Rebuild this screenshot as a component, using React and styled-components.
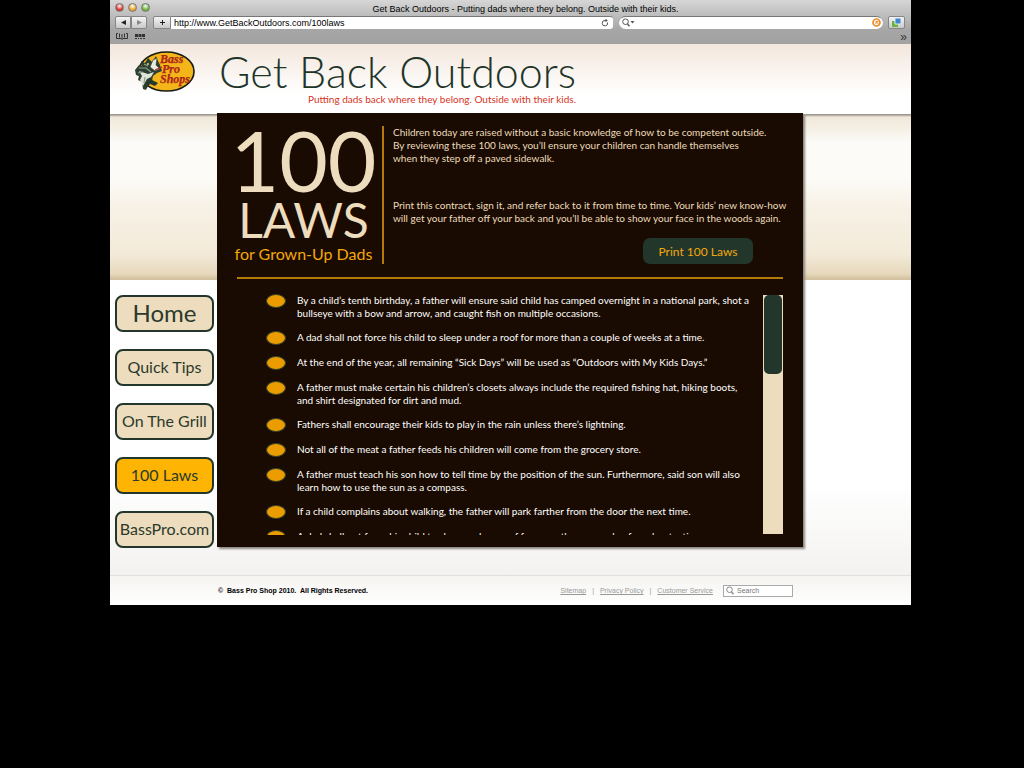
import React from "react";
import styled, { createGlobalStyle } from "styled-components";

const humanist = `Lato, "Open Sans", sans-serif`;
const system = `"Liberation Sans", Arial, sans-serif`;

const Global = createGlobalStyle`
  *, *::before, *::after { box-sizing: border-box; }
  body { margin: 0; background: #000; font-family: ${humanist}; }
  h1, h2, p, ul { margin: 0; padding: 0; font-weight: 400; }
  button, input { font: inherit; margin: 0; }
`;

const Page = styled.div`
  min-height: 100vh;
  padding: 0 113px 0 110px;
  background: #000;
`;

const Browser = styled.div`
  display: flex;
  flex-direction: column;
  background: #fff;
`;

const Chrome = styled.header`
  height: 44px;
  background: linear-gradient(#d6d6d6, #a6a6a6 30px, #a2a2a2);
  font-family: ${system};
  font-size: 9px;
  line-height: 12px;
  color: #000;
`;

const TitleBar = styled.div`
  display: flex;
  align-items: center;
  height: 15px;
  padding: 0 5px;
`;

const Lights = styled.div`
  display: flex;
  gap: 4px;
  width: 60px;
`;

const Light = styled.button`
  width: 9px;
  height: 9px;
  padding: 0;
  border: 1px solid #777;
  border-radius: 50%;
  background: radial-gradient(circle at 50% 30%, #fff 0, ${(p) => p.$tone} 60%);
`;

const WindowTitle = styled.div`
  flex: 1;
  padding: 3px 30px 0 0;
  text-align: center;
`;

const Toolbar = styled.div`
  display: flex;
  align-items: center;
  height: 14px;
  padding: 0 6px 0 5px;
`;

const ToolButton = styled.button`
  display: grid;
  place-items: center;
  width: ${(p) => p.$width || 16}px;
  height: 13px;
  margin-left: ${(p) => (p.$apart ? 6 : 0)}px;
  padding: 0;
  border: 1px solid #858585;
  border-radius: ${(p) => p.$radius || "2px"};
  background: linear-gradient(#f4f4f4, #c9c9c9);
`;

const Address = styled.form`
  display: flex;
  align-items: center;
  flex: 443;
  height: 13px;
  margin-right: 6px;
  padding-right: 4px;
  background: #fff;
  border-top: 1px solid #777;
  border-radius: 0 3px 3px 0;
`;

const WebSearch = styled.form`
  display: flex;
  align-items: center;
  flex: 262;
  height: 13px;
  margin-right: 5px;
  padding: 0 2px 0 3px;
  background: #fff;
  border-top: 1px solid #777;
  border-radius: 7px;
`;

const BareInput = styled.input`
  flex: 1;
  min-width: 0;
  height: 12px;
  padding: 0 3px;
  border: 0;
  outline: 0;
  background: transparent;
  color: inherit;
`;

const Bookmarks = styled.div`
  display: flex;
  align-items: center;
  gap: 7px;
  height: 15px;
  padding: 0 4px 0 6px;
`;

const Overflow = styled.span`
  margin-left: auto;
  font-size: 12px;
  color: #333;
`;

const Masthead = styled.div`
  display: flex;
  height: 70px;
  background: linear-gradient(#f3e6dc, #fff 50px);
`;

const LogoLink = styled.a`
  width: 109px;
  padding: 7px 0 0 25px;
`;

const SiteTitle = styled.h1`
  height: 49px;
  padding-top: 3px;
  font-size: 43px;
  font-weight: 300;
  line-height: 50px;
  color: #1f3529;
  white-space: nowrap;
`;

const Tagline = styled.p`
  font-size: 10px;
  line-height: 13px;
  text-align: right;
  color: #d6331c;
`;

const Main = styled.main`
  display: grid;
  grid-template-columns: 107px minmax(0, 1fr) 108px;
  padding-bottom: 27px;
  background:
    linear-gradient(#8f8c85, #c9c2b4 2px, #f0e8da 3px, #f4eee2 12px, #fcfbf7 28px, #fcfbf7 65px, #f7f1e5 95px, #f3ead9 140px, #e6d8bc 160px, #d3c29f 165px, #cdbf9f) 0 0 / 100% 166px no-repeat,
    linear-gradient(#fff 80%, #f3f2f0);
`;

const Nav = styled.nav`
  display: flex;
  flex-direction: column;
  gap: 17px;
  padding: 181px 3px 0 5px;
`;

const NavLink = styled.a`
  display: flex;
  align-items: center;
  justify-content: center;
  height: 37px;
  padding-bottom: 2px;
  border: 2px solid #22362b;
  border-radius: 8px;
  background: ${(p) => (p.$active ? "#fdb403" : "#eddcbd")};
  color: #2b3a2c;
  font-size: ${(p) => (p.$large ? 24 : 16)}px;
  text-decoration: none;
  white-space: nowrap;
`;

const Panel = styled.section`
  margin-top: -1px;
  height: 434px;
  padding: 13px 20px 0;
  background: #190b01;
  box-shadow: 2px 2px 2px #8a8580;
`;

const Intro = styled.div`
  display: grid;
  grid-template-columns: 147px minmax(0, 1fr);
  height: 138px;
`;

const Lockup = styled.h2`
  display: flex;
  flex-direction: column;
  align-items: center;
  padding-right: 12px;
  border-right: 2px solid #b57a08;
  color: #eddcbd;
`;

const Big = styled.span`
  font-size: 84px;
  line-height: 68px;
  height: 72px;
`;

const Laws = styled.span`
  font-size: 48px;
  line-height: 44px;
  height: 47px;
`;

const Sub = styled.span`
  font-size: 16px;
  line-height: 18px;
  color: #f4a70a;
  white-space: nowrap;
`;

const Copy = styled.div`
  padding-left: 9px;
  font-size: 10px;
  line-height: 13px;
  color: #eddcbd;
  white-space: nowrap;
`;

const CopyBlock = styled.p`
  margin-bottom: ${(p) => p.$gap}px;
`;

const PrintButton = styled.button`
  display: block;
  width: 110px;
  height: 26px;
  margin: 0 30px 0 auto;
  padding: 0;
  border: 0;
  border-radius: 7px;
  background: #22362b;
  color: #f4a70a;
  font-size: 12px;
`;

const Rule = styled.hr`
  height: 2px;
  margin: 13px 0 15px;
  border: 0;
  background: #b57a08;
`;

const Scroller = styled.div`
  display: flex;
  justify-content: space-between;
  height: 241px;
`;

const LawList = styled.ul`
  flex: 1;
  height: 241px;
  padding-left: 29px;
  overflow: hidden;
  list-style: none;
`;

const Law = styled.li`
  display: grid;
  grid-template-columns: 31px minmax(0, 1fr);
  margin-bottom: 11px;
  font-size: 10px;
  line-height: 13px;
  color: #fff;
  white-space: nowrap;

  &::before {
    content: "";
    width: 20px;
    height: 14px;
    border: 1px solid #35402a;
    border-radius: 50%;
    background: #eb9d00;
  }
`;

const Track = styled.div`
  width: 20px;
  height: 239px;
  margin-top: 1px;
  padding: 0 1px;
  background: #eddcbd;
`;

const Thumb = styled.div`
  height: 79px;
  border-radius: 5px;
  background: #22362b;
`;

const Footer = styled.footer`
  display: flex;
  align-items: center;
  height: 30px;
  padding: 0 118px 0 108px;
  border-top: 1px solid #e2e0dc;
  background: linear-gradient(#f5f4f1, #fff);
  font-family: ${system};
  font-size: 7px;
  color: #999;
`;

const Copyright = styled.p`
  margin-right: auto;
  color: #000;
  font-weight: 700;
  white-space: pre;
`;

const FooterLink = styled.a`
  color: #999;
`;

const Separator = styled.span`
  padding: 0 6px;
`;

const SiteSearch = styled.form`
  display: flex;
  align-items: center;
  width: 70px;
  height: 12px;
  margin-left: 10px;
  padding-left: 2px;
  border: 1px solid #aaa;
  background: #fff;
`;

const Magnifier = ({ color = "#555", menu }) => (
  <svg width={menu ? 13 : 8} height="9" viewBox={menu ? "0 0 13 9" : "0 0 8 9"} fill="none" stroke={color}>
    <circle cx="3.5" cy="3.7" r="2.8" />
    <path d="M5.5 6l2 2.3" strokeWidth="1.3" />
    {menu && <path d="M8.5 3h4l-2 2.5z" fill={color} stroke="none" />}
  </svg>
);

const Logo = () => (
  <svg width="60" height="42" viewBox="0 0 60 42" role="img" aria-label="Bass Pro Shops">
    <ellipse cx="31.5" cy="20.5" rx="27.5" ry="19.5" fill="#f4b51b" stroke="#151a12" strokeWidth="1.6" />
    <path d="M0 19L4 14 7 15 6 10 10 12 13 7 17 11 21 5 22 8 25 14 27 20 22 22 18 25 17 30 13 33 11 39 8 38 7 31 3 29 4 25 1 24z" fill="#2c4031" />
    <path d="M18 9l4-2-1 7 4 4-5 2-5-4z" fill="#e9ebdf" stroke="#29382b" strokeWidth=".6" />
    <path d="M4 20l9 3 6-2-3 5-4 2-4 7-3-6 2-4z" fill="#dfe4d8" />
    <path d="M4 17l7 0 5 4M3 22l5-1M10 26l-1 6M9 13l4 2" stroke="#8ea18b" strokeWidth="1.2" fill="none" />
    <path d="M15 28l8 4-3 3-5-2-4 5-1-4z" fill="#27392c" />
    <circle cx="13" cy="13" r="1" fill="#e9d35e" />
    <path d="M20 19l7-3" stroke="#b8281b" strokeWidth="1.2" />
    <text fill="#c0261c" stroke="#7f2110" strokeWidth=".25" fontFamily="Liberation Serif, serif" fontStyle="italic" fontWeight="700" fontSize="12">
      <tspan x="25" y="12">Bass</tspan>
      <tspan x="27" y="22">Pro</tspan>
      <tspan x="25" y="32">Shops</tspan>
    </text>
  </svg>
);

const links = [
  { label: "Home", large: true },
  { label: "Quick Tips" },
  { label: "On The Grill" },
  { label: "100 Laws", active: true },
  { label: "BassPro.com" },
];

const laws = [
  ["By a child’s tenth birthday, a father will ensure said child has camped overnight in a national park, shot a", "bullseye with a bow and arrow, and caught fish on multiple occasions."],
  ["A dad shall not force his child to sleep under a roof for more than a couple of weeks at a time."],
  ["At the end of the year, all remaining “Sick Days” will be used as “Outdoors with My Kids Days.”"],
  ["A father must make certain his children’s closets always include the required fishing hat, hiking boots,", "and shirt designated for dirt and mud."],
  ["Fathers shall encourage their kids to play in the rain unless there’s lightning."],
  ["Not all of the meat a father feeds his children will come from the grocery store."],
  ["A father must teach his son how to tell time by the position of the sun. Furthermore, said son will also", "learn how to use the sun as a compass."],
  ["If a child complains about walking, the father will park farther from the door the next time."],
  ["A dad shall not force his child to sleep under a roof for more than a couple of weeks at a time."],
];

const Lines = ({ items }) =>
  items.map((line, i) => (
    <React.Fragment key={line}>
      {i > 0 && <br />}
      {line}
    </React.Fragment>
  ));

export default function App() {
  return (
    <Page>
      <Global />
      <Browser>
        <Chrome>
          <TitleBar>
            <Lights>
              <Light $tone="#d9352c" aria-label="Close" />
              <Light $tone="#e8a32c" aria-label="Minimize" />
              <Light $tone="#6db33a" aria-label="Zoom" />
            </Lights>
            <WindowTitle>Get Back Outdoors - Putting dads where they belong. Outside with their kids.</WindowTitle>
          </TitleBar>
          <Toolbar>
            <ToolButton aria-label="Back" $radius="2px 0 0 2px">
              <svg width="5" height="5"><path d="M5 0v5L0 2.5z" fill="#222" /></svg>
            </ToolButton>
            <ToolButton aria-label="Forward" $radius="0 2px 2px 0">
              <svg width="5" height="5"><path d="M0 0v5l5-2.5z" fill="#888" /></svg>
            </ToolButton>
            <ToolButton aria-label="Add bookmark" $apart $width={18} $radius="2px 0 0 2px">
              <svg width="7" height="7"><path d="M3.5 1v5M1 3.5h5" stroke="#222" /></svg>
            </ToolButton>
            <Address>
              <BareInput aria-label="Address" defaultValue="http://www.GetBackOutdoors.com/100laws" />
              <svg width="8" height="8" fill="none" stroke="#555"><path d="M6.5 3.5A2.7 2.7 0 1 1 4 1.5h2M4.5 0L6 1.5 4.5 3" /></svg>
            </Address>
            <WebSearch>
              <Magnifier menu />
              <BareInput aria-label="Web search" />
              <svg width="9" height="9" fill="none" stroke="#ee8a22"><circle cx="4.5" cy="4.5" r="3.5" strokeWidth="1.7" /><path d="M6.5 3.5H4v2.5M4 3.5l3 3" /></svg>
            </WebSearch>
            <ToolButton aria-label="Tabs" $width={17}>
              <svg width="9" height="9"><path d="M0 3h6v6H0z" fill="#6bb53d" /><path d="M3 0h6v6H3z" fill="#3f86cc" stroke="#dce9f5" /></svg>
            </ToolButton>
          </Toolbar>
          <Bookmarks>
            <svg width="12" height="7" fill="none" stroke="#333"><path d="M2 .5H.5v5H5l1 1 1-1h4.5v-5H10M6 1v5M3.500 .5v4M8.500 .5v4" /></svg>
            <svg width="10" height="6" fill="#333"><path d="M0 0h3v3H0zM3.500 0h3v3h-3zM7 0h3v3H7zM0 4h2v1H0zM3 4h1v1H3zM5 4h2v1H5zM8 4h2v1H8z" /></svg>
            <Overflow>»</Overflow>
          </Bookmarks>
        </Chrome>

        <Masthead>
          <LogoLink href="#"><Logo /></LogoLink>
          <div>
            <SiteTitle>Get Back Outdoors</SiteTitle>
            <Tagline>Putting dads back where they belong. Outside with their kids.</Tagline>
          </div>
        </Masthead>

        <Main>
          <Nav>
            {links.map((l) => (
              <NavLink key={l.label} href="#" $active={l.active} $large={l.large}>{l.label}</NavLink>
            ))}
          </Nav>
          <Panel>
            <Intro>
              <Lockup>
                <Big>100</Big>
                <Laws>LAWS</Laws>
                <Sub>for Grown-Up Dads</Sub>
              </Lockup>
              <Copy>
                <CopyBlock $gap={34}>
                  <Lines items={[
                    "Children today are raised without a basic knowledge of how to be competent outside.",
                    "By reviewing these 100 laws, you’ll ensure your children can handle themselves",
                    "when they step off a paved sidewalk.",
                  ]} />
                </CopyBlock>
                <CopyBlock $gap={13}>
                  <Lines items={[
                    "Print this contract, sign it, and refer back to it from time to time. Your kids’ new know-how",
                    "will get your father off your back and you’ll be able to show your face in the woods again.",
                  ]} />
                </CopyBlock>
                <PrintButton>Print 100 Laws</PrintButton>
              </Copy>
            </Intro>
            <Rule />
            <Scroller>
              <LawList id="laws">
                {laws.map((lines, i) => (
                  <Law key={i}><span><Lines items={lines} /></span></Law>
                ))}
              </LawList>
              <Track role="scrollbar" aria-controls="laws" aria-valuenow={0} aria-orientation="vertical">
                <Thumb />
              </Track>
            </Scroller>
          </Panel>
        </Main>

        <Footer>
          <Copyright>©  Bass Pro Shop 2010.  All Rights Reserved.</Copyright>
          <FooterLink href="#">Sitemap</FooterLink>
          <Separator>|</Separator>
          <FooterLink href="#">Privacy Policy</FooterLink>
          <Separator>|</Separator>
          <FooterLink href="#">Customer Service</FooterLink>
          <SiteSearch>
            <Magnifier color="#888" />
            <BareInput aria-label="Search" placeholder="Search" />
          </SiteSearch>
        </Footer>
      </Browser>
    </Page>
  );
}
